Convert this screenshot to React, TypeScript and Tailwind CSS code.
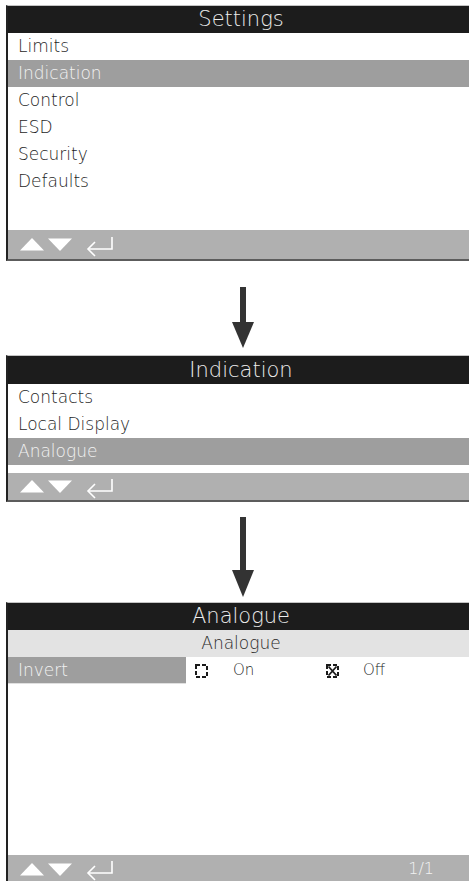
import React from "react";

const font = { fontFamily: '"DejaVu Sans", "Liberation Sans", sans-serif' };

function FooterIcons() {
  return (
    <div className="flex items-center gap-[4px]">
      <svg width="24" height="13" viewBox="0 0 24 13">
        <polygon points="0,12.5 24,12.5 12,0" fill="#ffffff" />
      </svg>
      <svg width="24" height="13" viewBox="0 0 24 13">
        <polygon points="0,0.5 24,0.5 12,13" fill="#ffffff" />
      </svg>
      <svg width="28" height="22" viewBox="0 0 28 22" className="ml-[10px] mt-[4px]">
        <path d="M26 1 V13 H2" stroke="#ffffff" strokeWidth="1.6" fill="none" />
        <path d="M9 6 L2 13 L9 20" stroke="#ffffff" strokeWidth="1.6" fill="none" />
      </svg>
    </div>
  );
}

function Row({ label, active }: { label: string; active?: boolean }) {
  return (
    <div
      className={
        "h-[27px] flex items-center pl-[10px] text-[17px] font-extralight leading-none " +
        (active ? "bg-[#9e9e9e] text-[#f2f2f2]" : "text-[#1e1e1e]")
      }
    >
      {label}
    </div>
  );
}

function Header({ title, h }: { title: string; h: string }) {
  return (
    <div
      className={
        "bg-[#1c1c1c] text-[#ececec] text-[21px] font-extralight leading-none flex items-center justify-center pl-[5px] " +
        h
      }
    >
      {title}
    </div>
  );
}

function Arrow({ shaft, head }: { shaft: number; head: number }) {
  const total = shaft + head;
  return (
    <div className="flex justify-center pl-[16px]">
      <svg width="22" height={total} viewBox={`0 0 22 ${total}`}>
        <rect x="8" y="0" width="6" height={shaft + 1} fill="#333333" />
        <polygon points={`0,${shaft} 22,${shaft} 11,${total}`} fill="#333333" />
      </svg>
    </div>
  );
}

function Box({ checked }: { checked?: boolean }) {
  return (
    <svg width="13" height="14" viewBox="0 0 13 14">
      <path d="M1 1 H12 V13 H1 Z" fill="none" stroke="#1a1a1a" strokeWidth="2" strokeDasharray="4 2" />
      {checked && (
        <path d="M2.5 2.5 L10.5 11.5 M10.5 2.5 L2.5 11.5" stroke="#1a1a1a" strokeWidth="1.8" />
      )}
    </svg>
  );
}

export default function App() {
  return (
    <div className="w-[469px] h-[881px] bg-white overflow-hidden pt-[5px]" style={font}>
      {/* Screen 1 */}
      <div className="ml-[6px] border-l-2 border-[#222] border-t border-t-[#c4c4c4] border-b-2 border-b-[#5c5c5c]">
        <Header title="Settings" h="h-[27px]" />
        <Row label="Limits" />
        <Row label="Indication" active />
        <Row label="Control" />
        <Row label="ESD" />
        <Row label="Security" />
        <Row label="Defaults" />
        <div className="h-[35px]" />
        <div className="h-[29px] bg-[#b0b0b0] flex items-center pl-[12px]">
          <FooterIcons />
        </div>
      </div>

      <div className="pt-[26px] pb-[7px]">
        <Arrow shaft={35} head={26} />
      </div>

      {/* Screen 2 */}
      <div className="ml-[6px] border-l-2 border-[#222] border-t border-t-[#c4c4c4] border-b-2 border-b-[#5c5c5c]">
        <Header title="Indication" h="h-[28px]" />
        <Row label="Contacts" />
        <Row label="Local Display" />
        <Row label="Analogue" active />
        <div className="h-[8px]" />
        <div className="h-[27px] bg-[#b0b0b0] flex items-center pl-[12px]">
          <FooterIcons />
        </div>
      </div>

      <div className="pt-[15px] pb-[5px]">
        <Arrow shaft={53} head={27} />
      </div>

      {/* Screen 3 */}
      <div className="ml-[6px] border-l-2 border-[#222] border-t border-t-[#c4c4c4]">
        <Header title="Analogue" h="h-[27px]" />
        <div className="h-[27px] bg-[#e3e3e3] text-[#2a2a2a] text-[17px] font-extralight leading-none flex items-center justify-center pl-[5px]">
          Analogue
        </div>
        <div className="h-[27px] flex items-center">
          <div className="w-[178px] h-full bg-[#9e9e9e] text-[#f2f2f2] text-[17px] font-extralight leading-none flex items-center pl-[10px] border-b border-[#e0e0e0]">
            Invert
          </div>
          <div className="flex items-center ml-[9px] text-[15px] font-extralight text-[#1e1e1e] leading-none">
            <Box />
            <span className="ml-[25px] w-[93px]">On</span>
            <Box checked />
            <span className="ml-[24px]">Off</span>
          </div>
        </div>
        <div className="h-[171px]" />
        <div className="h-[28px] bg-[#b0b0b0] flex items-center justify-between pl-[12px] pr-[35px]">
          <FooterIcons />
          <span className="text-[#f2f2f2] text-[16px] font-extralight leading-none">1/1</span>
        </div>
      </div>
    </div>
  );
}
